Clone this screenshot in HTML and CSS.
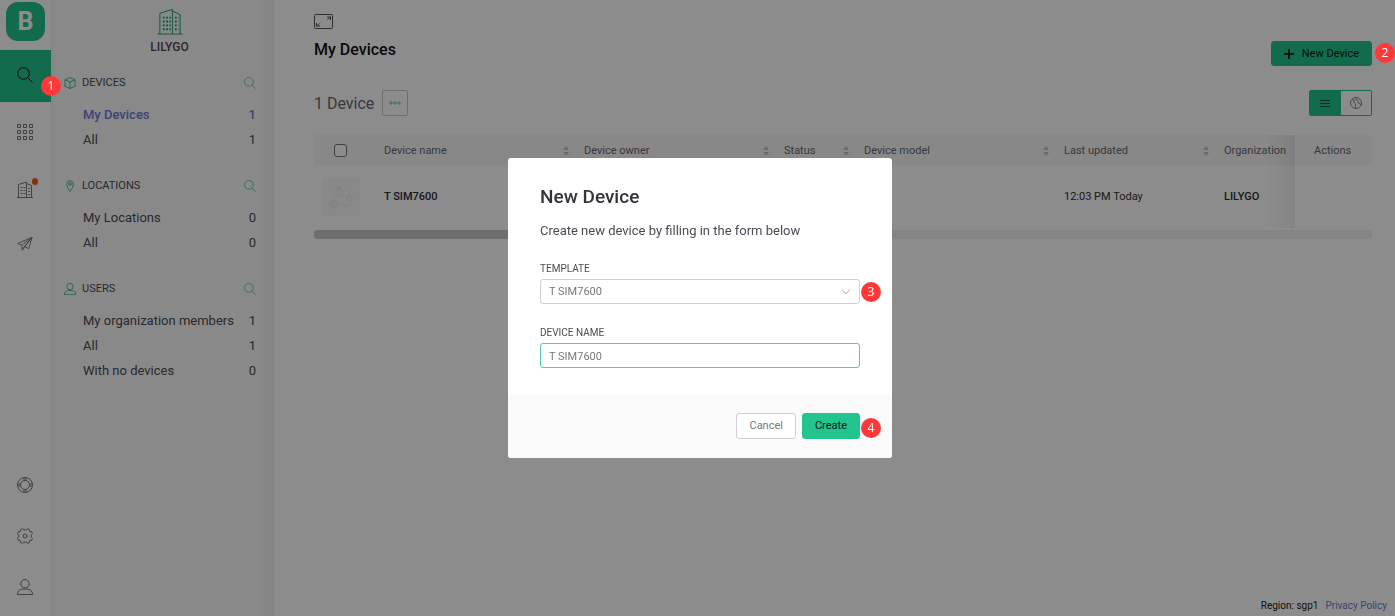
FILE: index.html
```html
<!DOCTYPE html>
<html lang="en">
<head>
<meta charset="utf-8">
<meta name="viewport" content="width=device-width, initial-scale=1">
<title>My Devices</title>
<link rel="stylesheet" href="styles.css">
</head>
<body>
<svg class="sprite" aria-hidden="true">
  <symbol id="i-search" viewBox="0 0 16 16"><circle cx="6.5" cy="6.5" r="5.8"/><path d="M10.8 10.8 15.5 15.5"/></symbol>
  <symbol id="i-grid" viewBox="0 0 16 16"><path d="M.5.5h3v3h-3zM6.5.5h3v3h-3zM12.5.5h3v3h-3zM.5 6.5h3v3h-3zM6.5 6.5h3v3h-3zM12.5 6.5h3v3h-3zM.5 12.5h3v3h-3zM6.5 12.5h3v3h-3zM12.5 12.5h3v3h-3z"/></symbol>
  <symbol id="i-building" viewBox="0 0 26 28"><path d="M0 27h26M2.500 27V5.500L15.500 1.500V27M15.500 3l8 4v20"/><path stroke-dasharray="2 1.500" stroke-width="2" d="M5.500 10h8.500M5.500 14h8.500M5.500 18h8.500M5.500 22h8.500M18 10h4M18 14h4M18 18h4M18 22h4"/></symbol>
  <symbol id="i-office" viewBox="0 0 16 17"><path d="M0 16.500h16M1.500 16.500v-13l8-2.500v15.500M9.500 2.500l5 2v12"/><path stroke-dasharray="2 1" d="M3.500 6.500h5M3.500 9.500h5M3.500 12.500h5M11 7.500h2.500M11 10.500h2.500M11 13.500h2.500"/></symbol>
  <symbol id="i-plane" viewBox="0 0 17 16"><path d="M.8 7.500 16 .8 12.500 13 8 10.500 5.500 14.500 5 9.300zM5 9.300 16 .8 8 10.500M5.500 14.500 16 .8"/></symbol>
  <symbol id="i-ring" viewBox="0 0 16 16"><circle cx="8" cy="8" r="7.500"/><circle cx="8" cy="8" r="4.500"/><path d="M7 .7v2.900M9 .7v2.900M7 12.400v2.900M9 12.400v2.900M.7 7h2.900M.7 9h2.900M12.400 7h2.900M12.400 9h2.900"/></symbol>
  <symbol id="i-gear" viewBox="0 0 16 16"><circle cx="8" cy="8" r="2"/><path d="M5.500.6 6.500 1.800h3L10.500.6 12.500 1.600 12.400 3.200 13 3.700 14.700 3.600 15.500 5.600 14.200 6.700v2.600L15.500 10.400 14.700 12.400 13 12.300 12.400 12.900 12.500 14.500 10.500 15.400 9.500 14.200h-3L5.500 15.400 3.500 14.500 3.600 12.900 3 12.300 1.300 12.400.5 10.400 1.800 9.300V6.700L.5 5.600 1.300 3.600 3 3.700 3.600 3.200 3.500 1.600z"/></symbol>
  <symbol id="i-user" viewBox="0 0 16 16"><circle cx="8" cy="4.700" r="4.200"/><path d="M.5 15.500c0-3.400 1.900-5 4.700-5.400h5.600c2.800.4 4.700 2 4.700 5.400z"/></symbol>
  <symbol id="i-cube" viewBox="0 0 12 12"><path d="M6 .6 11 2.800v6.400L6 11.500 1 9.200V2.800zM1 2.800 6 5l5-2.200M6 5v6.500"/></symbol>
  <symbol id="i-pin" viewBox="0 0 12 12"><path d="M6 11.500C4 8.500 2.700 6.500 2.700 4.100a3.300 3.300 0 0 1 6.600 0C9.300 6.500 8 8.500 6 11.500z"/><circle cx="6" cy="4" r="1.300"/></symbol>
  <symbol id="i-expand" viewBox="0 0 19 15"><rect x=".5" y=".5" width="18" height="14" rx="1"/><path d="M13 3h3.500v3M16.500 3 13.500 5.500M2.500 9v3H6M2.500 12 5.500 9.500"/></symbol>
  <symbol id="i-globe" viewBox="0 0 12 12"><circle cx="6" cy="6" r="5.500"/><path d="M2 2.500 4.500 3.200 3.700 5.500 5.700 7l-.5 4.300M6.500.7 6 2.500l2 1 .3 2.500L11 7.500"/></symbol>
  <symbol id="i-sort" viewBox="0 0 6 10"><path d="M3 0 6 4H0zM3 10 0 6h6z"/></symbol>
</svg>

<div class="app">
  <nav class="rail" aria-label="Main">
    <a class="logo" href="#" aria-label="Home">B</a>
    <a class="rail-item active" href="#" aria-label="Search"><svg class="ico"><use href="#i-search"/></svg><span class="badge badge-search">1</span></a>
    <a class="rail-item" href="#" aria-label="Templates"><svg class="ico"><use href="#i-grid"/></svg></a>
    <a class="rail-item" href="#" aria-label="Organization"><svg class="ico ico-office"><use href="#i-office"/></svg><span class="dot"></span></a>
    <a class="rail-item" href="#" aria-label="Send"><svg class="ico"><use href="#i-plane"/></svg></a>
    <div class="rail-bottom">
      <a class="rail-item" href="#" aria-label="Help"><svg class="ico"><use href="#i-ring"/></svg></a>
      <a class="rail-item" href="#" aria-label="Settings"><svg class="ico"><use href="#i-gear"/></svg></a>
      <a class="rail-item" href="#" aria-label="Profile"><svg class="ico"><use href="#i-user"/></svg></a>
    </div>
  </nav>

  <aside class="panel">
    <div class="org"><svg class="org-icon"><use href="#i-building"/></svg><span>LILYGO</span></div>
    <section class="group">
      <h2 class="group-head"><svg class="small"><use href="#i-cube"/></svg><span>DEVICES</span><button class="plain" aria-label="Search devices"><svg class="small"><use href="#i-search"/></svg></button></h2>
      <a class="link current" href="#"><span>My Devices</span><span>1</span></a>
      <a class="link" href="#"><span>All</span><span>1</span></a>
    </section>
    <section class="group">
      <h2 class="group-head"><svg class="small"><use href="#i-pin"/></svg><span>LOCATIONS</span><button class="plain" aria-label="Search locations"><svg class="small"><use href="#i-search"/></svg></button></h2>
      <a class="link" href="#"><span>My Locations</span><span>0</span></a>
      <a class="link" href="#"><span>All</span><span>0</span></a>
    </section>
    <section class="group">
      <h2 class="group-head"><svg class="small user-small"><use href="#i-user"/></svg><span>USERS</span><button class="plain" aria-label="Search users"><svg class="small"><use href="#i-search"/></svg></button></h2>
      <a class="link" href="#"><span>My organization members</span><span>1</span></a>
      <a class="link" href="#"><span>All</span><span>1</span></a>
      <a class="link" href="#"><span>With no devices</span><span>0</span></a>
    </section>
  </aside>

  <main class="main">
    <header class="top">
      <div>
        <button class="plain expand" aria-label="Full screen"><svg><use href="#i-expand"/></svg></button>
        <h1>My Devices</h1>
      </div>
      <div class="anchor">
        <button class="btn primary new"><svg viewBox="0 0 10 10"><path d="M5 0v10M0 5h10"/></svg>New Device</button>
        <span class="badge badge-side">2</span>
      </div>
    </header>
    <div class="tools">
      <span class="count">1 Device</span>
      <button class="more" aria-label="More"><svg viewBox="0 0 12 4"><circle cx="2" cy="2" r="1.200"/><circle cx="6" cy="2" r="1.200"/><circle cx="10" cy="2" r="1.200"/></svg></button>
      <div class="toggle">
        <button class="on" aria-label="List view"><svg viewBox="0 0 10 9"><path d="M0 1.500h10M0 4.500h10M0 7.500h10"/></svg></button>
        <button aria-label="Map view"><svg class="globe"><use href="#i-globe"/></svg></button>
      </div>
    </div>
    <table class="devices">
      <colgroup><col class="c-check"><col class="c-wide"><col class="c-wide"><col class="c-status"><col class="c-wide"><col class="c-date"><col><col class="c-actions"></colgroup>
      <thead>
        <tr>
          <th class="check"><input type="checkbox" aria-label="Select all"></th>
          <th><div class="th">Device name<svg><use href="#i-sort"/></svg></div></th>
          <th><div class="th">Device owner<svg><use href="#i-sort"/></svg></div></th>
          <th><div class="th">Status<svg><use href="#i-sort"/></svg></div></th>
          <th><div class="th">Device model<svg><use href="#i-sort"/></svg></div></th>
          <th><div class="th">Last updated<svg><use href="#i-sort"/></svg></div></th>
          <th class="edge">Organization</th>
          <th class="actions">Actions</th>
        </tr>
      </thead>
      <tbody>
        <tr>
          <td class="thumb-cell"><div class="thumb"><svg viewBox="0 0 24 24"><path d="M10 1v9M10 1l4 7-4 2-4-2zM6 11h12a2 2 0 0 1 2 2v1M14 19H9M21 18a2 2 0 0 1-2 2h-5M5 15V12"/><circle cx="4.500" cy="19" r="4"/><path d="m1 17 3.500 2L8 17M4.500 19v4"/><circle cx="20.500" cy="13" r="2.500"/><path d="M19 7l2-1v3"/></svg></div></td>
          <td class="strong">T SIM7600</td>
          <td></td><td></td><td></td>
          <td class="date">12:03 PM Today</td>
          <td class="strong edge">LILYGO</td>
          <td></td>
        </tr>
      </tbody>
    </table>
    <div class="track"><div class="bar"></div></div>
    <footer class="foot"><span>Region: sgp1</span><a href="#">Privacy Policy</a></footer>
  </main>
</div>

<div class="overlay">
  <form class="modal" role="dialog" aria-labelledby="dlg-title">
    <div class="modal-body">
      <h2 id="dlg-title">New Device</h2>
      <p>Create new device by filling in the form below</p>
      <label for="template">TEMPLATE</label>
      <div class="anchor">
        <select id="template" class="field"><option>T SIM7600</option></select>
        <svg class="chevron" viewBox="0 0 10 6"><path d="M1 .5 5 5 9 .5"/></svg>
        <span class="badge badge-field">3</span>
      </div>
      <label for="name">DEVICE NAME</label>
      <input id="name" class="field focused" type="text" value="T SIM7600">
    </div>
    <div class="modal-foot">
      <button type="button" class="btn">Cancel</button>
      <div class="anchor">
        <button type="button" class="btn primary">Create</button>
        <span class="badge badge-create">4</span>
      </div>
    </div>
  </form>
</div>
</body>
</html>
```
FILE: styles.css
```css
* { box-sizing: border-box; }
body { margin: 0; font: 13px/16px Roboto, "Liberation Sans", sans-serif; color: #4a4b52; background: #fff; }
h1, h2, p { margin: 0; font-weight: 400; }
a { color: inherit; text-decoration: none; }
button, input, select { font: inherit; color: inherit; margin: 0; }
svg { fill: none; stroke: currentColor; display: block; flex: none; }
.sprite { position: absolute; width: 0; height: 0; }
.plain { border: 0; padding: 0; background: none; }

.app { display: flex; min-height: 100vh; }

.rail { width: 51px; display: flex; flex-direction: column; gap: 4px; align-items: center; background: #fff; color: #777980; }
.logo { width: 39px; height: 39px; margin: 2px 0 5px; border-radius: 12px; background: #23c48e; color: #fff; font: 700 25px/39px Roboto, sans-serif; text-align: center; }
.rail-item { position: relative; width: 100%; height: 52px; padding-right: 1px; display: flex; align-items: center; justify-content: center; }
.rail-item.active { background: #23c48e; color: #111; }
.active .ico { margin-bottom: 2px; }
.ico { width: 16px; height: 16px; }
.ico-office { height: 17px; margin-top: 3px; }
.dot { position: absolute; top: 16px; left: 32px; width: 6px; height: 7px; border-radius: 50%; background: #e8601c; }
.rail-bottom { width: 100%; margin-top: auto; padding-bottom: 4px; }
.rail-bottom .rail-item { height: 51px; }

.panel { width: 224px; padding: 8px 0 0 13px; background: linear-gradient(90deg, #f3f3f3, #fafafa 7px, #fafafa 204px, #f0f0f0); }
.org { display: flex; flex-direction: column; align-items: center; gap: 4px; font-size: 12px; font-weight: 500; margin-bottom: 16px; }
.org-icon { width: 26px; height: 27px; color: #159c70; }
.group { padding-right: 19px; margin-bottom: 22px; }
.group-head { display: flex; align-items: center; height: 24px; gap: 6px; margin-bottom: 7px; font-size: 11px; }
.group-head .plain { margin-left: auto; }
.small { width: 12px; height: 12px; color: #4fb594; }
.user-small { stroke-width: 1.300; }
.link { display: flex; justify-content: space-between; padding-left: 19px; line-height: 25px; }
.current { color: #6f7bd4; font-weight: 500; }

.main { flex: 1; min-width: 0; display: flex; flex-direction: column; padding: 14px 23px 2px 39px; }
.top { display: flex; justify-content: space-between; align-items: flex-end; }
.expand { display: block; color: #555; }
.expand svg { width: 19px; height: 15px; }
h1 { font-size: 16px; font-weight: 500; line-height: 20px; margin: 11px 0 6px; color: #111; }
.anchor { position: relative; }
.btn { height: 26px; padding: 0 12px; border: 1px solid #d0d0d0; border-radius: 3px; background: #fff; color: #77787e; font-size: 11px; line-height: 16px; display: flex; align-items: center; }
.btn.primary { background: #23c48e; border-color: #23c48e; color: #0c1713; }
.new { gap: 8px; height: 25px; }
.new svg { width: 10px; height: 10px; stroke-width: 1.500; color: #000; }
.tools { display: flex; align-items: center; height: 26px; margin-top: 24px; gap: 8px; }
.count { font-size: 16px; line-height: 18px; padding-top: 1px; color: #66686f; }
.more { width: 26px; height: 26px; padding: 0 6px; border: 1px solid #c8c8c8; border-radius: 2px; background: #fff; color: #4fb594; }
.more svg { width: 12px; height: 4px; stroke-width: .8; }
.toggle { margin-left: auto; display: flex; width: 63px; height: 26px; border: 1px solid #23c48e; border-radius: 2px; }
.toggle button { flex: 1; display: flex; align-items: center; justify-content: center; padding: 0; border: 0; background: #fff; color: #888; }
.toggle .on { background: #23c48e; color: #164f3b; }
.toggle svg { width: 10px; height: 9px; }
.toggle .globe { width: 12px; height: 12px; }

.devices { width: 100%; margin-top: 19px; table-layout: fixed; border-collapse: collapse; font-size: 11px; }
.c-check { width: 62px; } .c-wide { width: 200px; } .c-status { width: 80px; } .c-date { width: 160px; } .c-actions { width: 77px; }
.devices th, .devices td { padding: 0 8px; text-align: left; white-space: nowrap; }
.devices th { height: 30px; padding-top: 1px; font-weight: 400; background: #f8f8f8; color: #66686f; }
.devices td { height: 63px; }
.devices .date { color: #333; }
.th { display: flex; justify-content: space-between; align-items: center; }
.th svg { width: 6px; height: 10px; margin-right: -1px; fill: #c4c4c4; stroke: none; }
.devices .check { padding: 0 0 0 20px; }
.check input { appearance: none; display: block; width: 13px; height: 13px; border: 1px solid #777; border-radius: 3px; background: #fff; }
.devices .actions { padding-left: 19px; }
.devices .edge { background-image: linear-gradient(90deg, transparent 50px, #f0f0f0); }
.devices th.edge { background-image: linear-gradient(90deg, transparent 50px, #e8e8e8); }
.thumb { width: 38px; height: 38px; display: grid; place-items: center; background: #f9f9f9; color: #ebebeb; }
.thumb svg { width: 24px; height: 24px; }
.strong { font-weight: 500; color: #2d2e33; }
.track { margin-top: 2px; height: 9px; background: #f0f0f0; }
.bar { width: 50%; height: 9px; border-radius: 4px; background: #c8c8c8; }
.foot { display: flex; justify-content: flex-end; gap: 7px; margin: auto -15px 0 0; font-size: 10px; color: #222; }
.foot a { color: #6f7bd4; }

.overlay { position: fixed; inset: 0; z-index: 5; display: grid; place-items: center; padding-left: 5px; background: rgba(0, 0, 0, .45); }
.modal { width: 384px; border-radius: 3px; background: #fff; }
.modal-body { padding: 28px 32px 26px; }
.modal h2 { font-size: 19px; font-weight: 500; line-height: 22px; margin-bottom: 14px; color: #33343a; }
.modal p { margin-bottom: 23px; line-height: 18px; }
.modal label { display: block; font-size: 10px; line-height: 11px; margin-bottom: 5px; }
.modal .modal-body .anchor { margin-bottom: 23px; }
.field { display: block; appearance: none; width: 100%; height: 25px; padding: 1px 8px 0; border: 1px solid #d0d0d0; border-radius: 3px; background: #fff; font-size: 11px; color: #77787e; outline: 0; }
.focused { border-color: #4fcda4; }
.chevron { position: absolute; right: 9px; top: 10px; width: 10px; height: 6px; color: #aaa; }
.modal-foot { display: flex; justify-content: flex-end; gap: 6px; padding: 19px 32px; background: #fafafa; border-radius: 0 0 3px 3px; }

.badge { position: absolute; z-index: 10; width: 20px; height: 20px; border-radius: 50%; background: #ff3838; color: #fff; font: 12px/20px "Open Sans", sans-serif; text-align: center; }
.badge-search { left: 41px; top: 26px; }
.badge-side { left: calc(100% + 3px); top: 2px; }
.badge-field { left: calc(100% + 1px); top: 3px; }
.badge-create { left: calc(100% + 1px); top: 5px; }
```
